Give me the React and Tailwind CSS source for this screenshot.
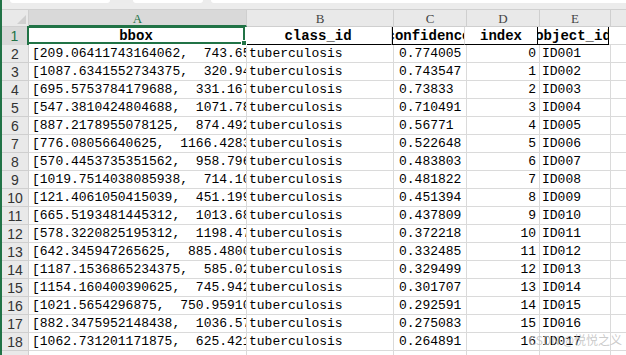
const rows = [
  ['[209.06411743164062,  743.6546630859375,  310.2]', '0.774005', '0', 'ID001'],
  ['[1087.6341552734375,  320.9412231445312,  40.1]', '0.743547', '1', 'ID002'],
  ['[695.5753784179688,  331.1676330566406,  22.4]', '0.73833', '2', 'ID003'],
  ['[547.3810424804688,  1071.7860107421875,  9.1]', '0.710491', '3', 'ID004'],
  ['[887.2178955078125,  874.4921875,  118.6]', '0.56771', '4', 'ID005'],
  ['[776.08056640625,  1166.4283447265625,  88.2]', '0.522648', '5', 'ID006'],
  ['[570.4453735351562,  958.7966918945312,  64.0]', '0.483803', '6', 'ID007'],
  ['[1019.7514038085938,  714.1022338867188,  3.5]', '0.481822', '7', 'ID008'],
  ['[121.4061050415039,  451.1993713378906,  77.9]', '0.451394', '8', 'ID009'],
  ['[665.5193481445312,  1013.6856079101562,  5.0]', '0.437809', '9', 'ID010'],
  ['[578.3220825195312,  1198.4716796875,  61.7]', '0.372218', '10', 'ID011'],
  ['[642.345947265625,  885.4800415039062,  12.3]', '0.332485', '11', 'ID012'],
  ['[1187.1536865234375,  585.0258178710938,  4.4]', '0.329499', '12', 'ID013'],
  ['[1154.160400390625,  745.9420776367188,  8.8]', '0.301707', '13', 'ID014'],
  ['[1021.5654296875,  750.9591064453125,  2.6]', '0.292591', '14', 'ID015'],
  ['[882.3475952148438,  1036.5787353515625,  7.7]', '0.275083', '15', 'ID016'],
  ['[1062.731201171875,  625.4216918945312,  9.9]', '0.264891', '16', 'ID017'],
];

const mono = "font-['Liberation_Mono','Noto_Sans_CJK_SC',monospace]";
const cell = 'h-[18px] shrink-0 border-r border-b border-[#dadada] overflow-hidden whitespace-pre leading-[18px]';

function HeadCell({ w, children, last }) {
  return (
    <div className={`${cell} ${w} flex justify-center border-b-black ${last ? 'border-r-black' : ''}`}>
      <span className={`shrink-0 text-[14px] font-bold ${mono}`}>{children}</span>
    </div>
  );
}

export default function App() {
  return (
    <div className={`w-[626px] h-[355px] overflow-hidden bg-white border-l-2 border-[#217346] text-[13px] text-black ${mono}`}>
      <div className="h-[10px] bg-[#ececec] border-b border-[#d0d0d0] flex">
        <div className="ml-[8px] w-[100px] h-[3px] bg-white rounded-b-[4px]" />
        <div className="ml-[23px] w-[70px] h-[3px] bg-white rounded-b-[4px]" />
        <div className="ml-[8px] flex-1 h-[3px] bg-white rounded-bl-[4px]" />
      </div>

      {/* column letters */}
      <div className="flex h-[17px] bg-[#e9e9e9] text-[13px] text-[#444] leading-[17px] font-['Liberation_Serif',serif]">
        <div className="relative w-[27px] shrink-0 border-r border-b border-[#cfcfcf]">
          <div className="absolute right-[2px] bottom-[2px] w-0 h-0 border-l-[9px] border-t-[9px] border-l-transparent border-t-transparent border-r-[9px] border-r-[#cfcfcf]" />
        </div>
        <div className="w-[218px] shrink-0 text-center bg-[#d9d9d9] text-[#217346] border-r border-b-2 border-[#cfcfcf] border-b-[#217346]">A</div>
        <div className="w-[147px] shrink-0 text-center border-r border-b border-[#cfcfcf]">B</div>
        <div className="w-[73px] shrink-0 text-center border-r border-b border-[#cfcfcf]">C</div>
        <div className="w-[73px] shrink-0 text-center border-r border-b border-[#cfcfcf]">D</div>
        <div className="w-[71px] shrink-0 text-center border-r border-b border-[#cfcfcf]">E</div>
        <div className="flex-1 border-b border-[#cfcfcf]" />
      </div>

      <div className="flex">
        <div className="w-[27px] h-[18px] shrink-0 bg-[#d9d9d9] border-r-2 border-[#217346] text-center text-[14px] leading-[18px] text-[#217346] font-['Liberation_Sans',sans-serif]">1</div>
        <div className="relative w-[218px] h-[18px] shrink-0 -ml-[2px] -mt-[1px] border-2 border-[#217346] flex justify-center leading-[16px]">
          <span className="text-[14px] font-bold">bbox</span>
          <div className="absolute -right-[4px] -bottom-[4px] w-[6px] h-[6px] bg-[#217346] border border-white" />
        </div>
        <HeadCell w="w-[147px]">class_id</HeadCell>
        <HeadCell w="w-[73px] border-l border-l-black">confidence</HeadCell>
        <HeadCell w="w-[73px] border-r-black">index</HeadCell>
        <HeadCell w="w-[71px]" last>object_id</HeadCell>
        <div className={`${cell} flex-1 border-r-0`} />
      </div>

      {rows.map((r, i) => (
        <div key={i} className="flex">
          <div className="w-[27px] h-[18px] shrink-0 bg-[#e9e9e9] border-r border-b border-[#cfcfcf] text-center text-[14px] leading-[18px] text-[#333] font-['Liberation_Sans',sans-serif]">{i + 2}</div>
          <div className={`${cell} w-[218px] pl-[3px]`}>{r[0]}</div>
          <div className={`${cell} w-[147px] pl-[2px]`}>tuberculosis</div>
          <div className={`${cell} w-[73px] pl-[5px]`}>{r[1]}</div>
          <div className={`${cell} w-[73px] pr-[3px] text-right`}>{r[2]}</div>
          <div className={`${cell} w-[71px] pl-[2px]`}>{r[3]}</div>
          <div className={`${cell} flex-1 border-r-0`} />
        </div>
      ))}

      <div className="relative flex">
        <div className="w-[27px] h-[18px] shrink-0 bg-[#e9e9e9] border-r border-[#cfcfcf] text-center text-[14px] leading-[18px] text-[#333] font-['Liberation_Sans',sans-serif]">19</div>
        <div className="w-[218px] h-[18px] border-r border-[#dadada]" />
        <div className="w-[147px] h-[18px] border-r border-[#dadada]" />
        <div className="w-[73px] h-[18px] border-r border-[#dadada]" />
        <div className="w-[73px] h-[18px] border-r border-[#dadada]" />
        <div className="w-[71px] h-[18px] border-r border-[#dadada]" />
        <div className="absolute right-[4px] -top-[20px] text-[12px] text-[#bdbdbd]/80 font-['Noto_Sans_CJK_SC',sans-serif]">CSDN @悦悦之义</div>
      </div>
    </div>
  );
}
